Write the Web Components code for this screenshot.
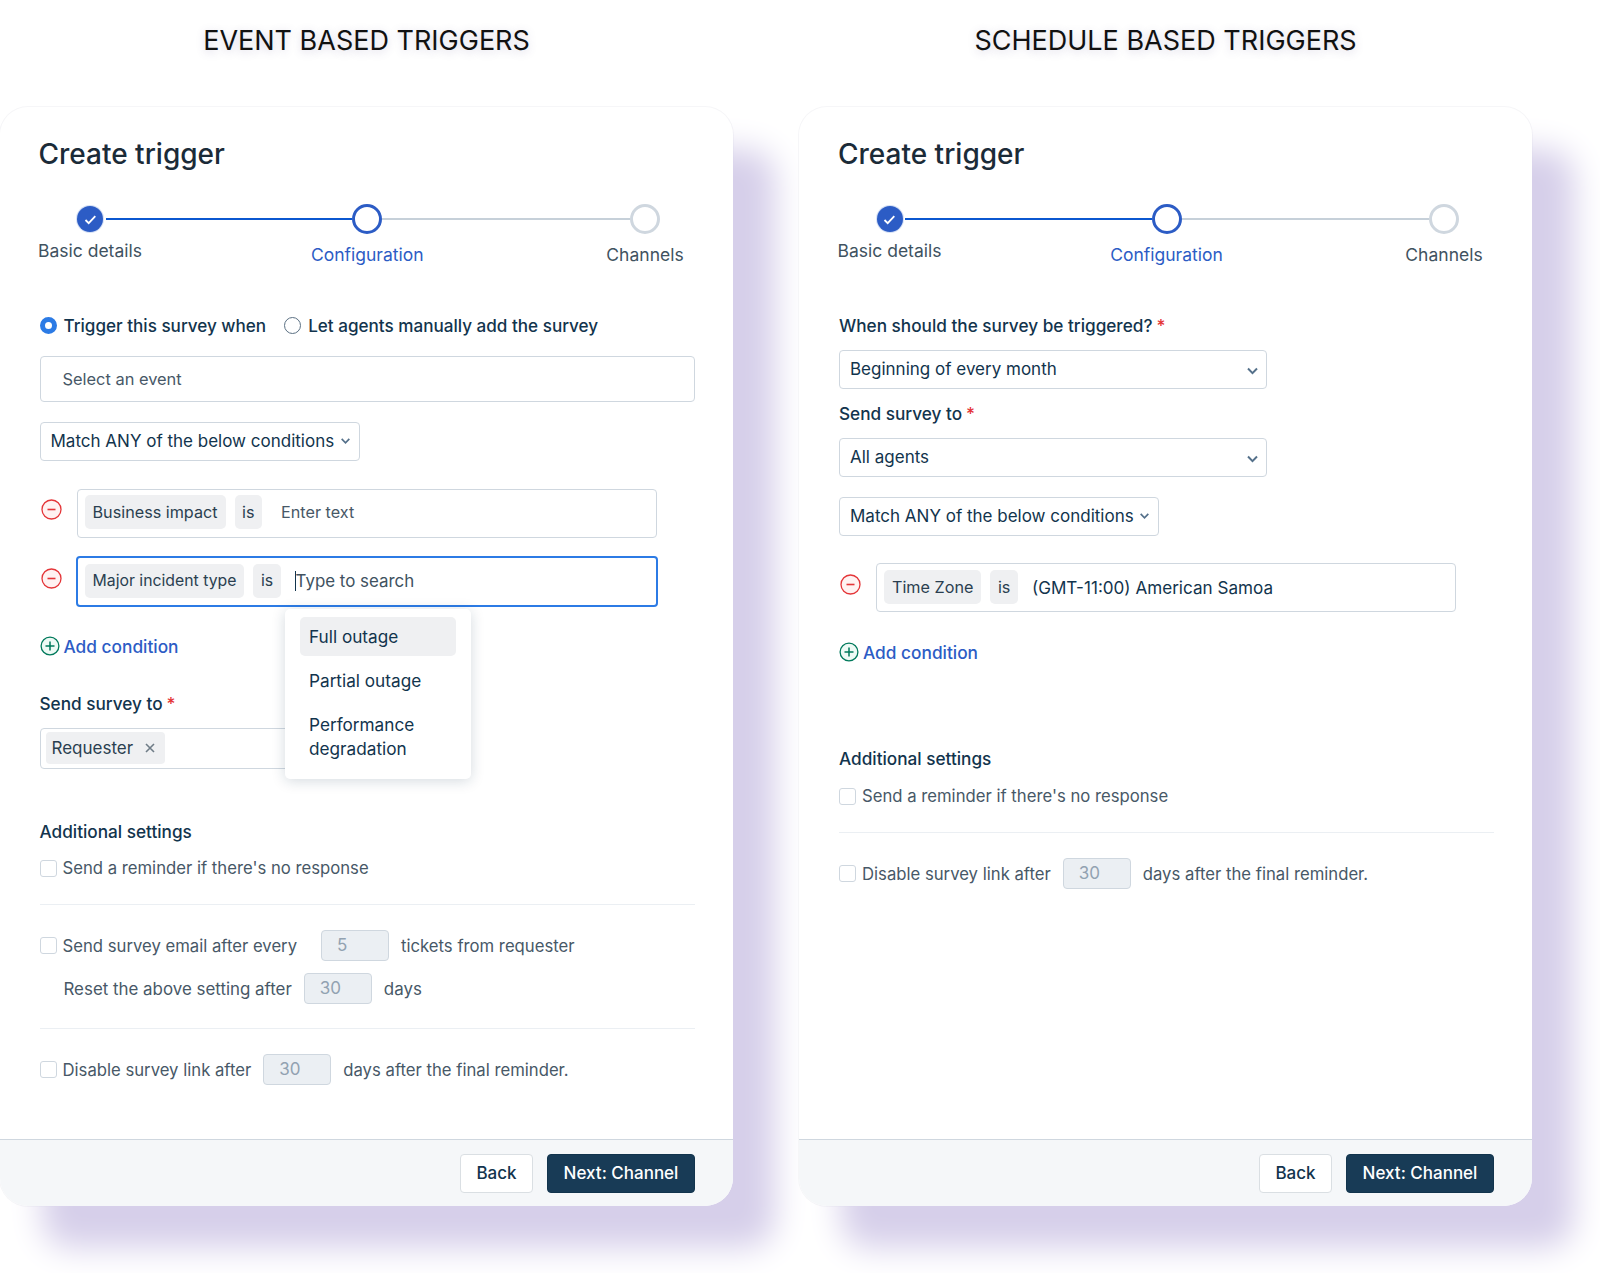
<!DOCTYPE html>
<html>
<head>
<meta charset="utf-8">
<style>
html,body{margin:0;background:#fff;}
body{font-family:Inter,"Liberation Sans",sans-serif;color:#12344d;width:1600px;height:1273px;overflow:hidden;}
.page{display:grid;grid-template-columns:733px 733px;gap:66px;}
</style>
</head>
<body>
<div class="page">
  <tp-panel heading="EVENT BASED TRIGGERS" style="--pad:39.5px">
    <tp-steps style="margin-top:33px"></tp-steps>
    <tp-radios style="margin-top:46px"></tp-radios>
    <tp-field style="margin-top:19px">Select an event</tp-field>
    <tp-select style="margin-top:20px;width:320px" small>Match ANY of the below conditions</tp-select>
    <tp-condition style="margin-top:28px" name="Business impact" value="Enter text"></tp-condition>
    <tp-condition style="margin-top:18px" name="Major incident type" value="Type to search" focused></tp-condition>
    <tp-add style="margin-top:27px"></tp-add>
    <tp-label style="margin-top:34px" required>Send survey to</tp-label>
    <tp-tags style="margin-top:12px"><tp-tag>Requester</tp-tag></tp-tags>
    <tp-label style="margin-top:51px">Additional settings</tp-label>
    <tp-line style="margin-top:12px" check>Send a reminder if there's no response</tp-line>
    <tp-rule style="margin-top:24px"></tp-rule>
    <tp-line style="margin-top:25px" check>Send survey email after every<tp-num style="margin:0 12px 0 24px">5</tp-num>tickets from requester</tp-line>
    <tp-line style="margin-top:12px;padding-left:24px;font-size:16.9px">Reset the above setting after<tp-num style="margin:0 12px">30</tp-num>days</tp-line>
    <tp-rule style="margin-top:24px"></tp-rule>
    <tp-line style="margin-top:25px" check>Disable survey link after<tp-num style="margin:0 12px">30</tp-num>days after the final reminder.</tp-line>
    <tp-menu></tp-menu>
  </tp-panel>
  <tp-panel heading="SCHEDULE BASED TRIGGERS">
    <tp-steps style="margin-top:33px"></tp-steps>
    <tp-label style="margin-top:47px" required>When should the survey be triggered?</tp-label>
    <tp-select style="margin-top:12px;width:428px">Beginning of every month</tp-select>
    <tp-label style="margin-top:13px" required>Send survey to</tp-label>
    <tp-select style="margin-top:12px;width:428px">All agents</tp-select>
    <tp-select style="margin-top:20px;width:320px" small>Match ANY of the below conditions</tp-select>
    <tp-condition style="margin-top:27px" name="Time Zone" value="(GMT-11:00) American Samoa" filled></tp-condition>
    <tp-add style="margin-top:28px"></tp-add>
    <tp-label style="margin-top:83px">Additional settings</tp-label>
    <tp-line style="margin-top:13px" check>Send a reminder if there's no response</tp-line>
    <tp-rule style="margin-top:24px"></tp-rule>
    <tp-line style="margin-top:25px" check>Disable survey link after<tp-num style="margin:0 12px">30</tp-num>days after the final reminder.</tp-line>
  </tp-panel>
</div>

<script>
// small helper, every element below is the same shape
function define(tag, css, html) {
  customElements.define(tag, class extends HTMLElement {
    constructor() {
      super();
      const root = this.attachShadow({ mode: "open" });
      root.innerHTML = "<style>" + css + "</style>" + (typeof html === "function" ? html(this) : html);
    }
  });
}

define("tp-panel", `
  :host{display:block;position:relative;}
  .title{height:82px;margin:0;font-size:27px;font-weight:400;line-height:82px;text-align:center;color:#111;
    text-shadow:0 2px 8px rgba(90,80,140,.25);}
  .card{position:relative;height:1099px;margin-top:25px;box-sizing:border-box;background:#fff;border-radius:28px;
    box-shadow:42px 42px 32px #d6cfea,0 0 0 1px #f6f6f8;display:flex;flex-direction:column;}
  .body{flex:1;padding:30px 38px 0 var(--pad,40px);}
  h2{margin:0 0 0 -1px;font-size:28px;font-weight:500;line-height:34px;color:#1b2b38;}
  footer{height:67px;box-sizing:border-box;border-top:1px solid #cfd7df;background:#f5f7f9;border-radius:0 0 28px 28px;
    display:flex;justify-content:flex-end;align-items:center;gap:14px;padding:0 38px 0 0;}
  button{font:500 17px Inter,"Liberation Sans",sans-serif;height:39px;box-sizing:border-box;border-radius:4px;padding:0 15px;}
  .back{background:#fff;border:1px solid #dadfe3;color:#12344d;width:73px;}
  .next{background:#183b56;border:1px solid #12344d;color:#fff;width:148px;}
`, (el) => `
  <div class="title">${el.getAttribute("heading")}</div>
  <div class="card">
    <div class="body"><h2>Create trigger</h2><slot></slot></div>
    <footer><button class="back">Back</button><button class="next">Next: Channel</button></footer>
  </div>
`);

define("tp-steps", `
  :host{display:grid;grid-template-columns:100px 1fr 100px 1fr 100px;grid-template-rows:30px 24px;row-gap:9px;height:63px;text-align:center;font-size:17.5px;line-height:24px;}
  .dot{justify-self:center;align-self:center;box-sizing:border-box;border-radius:50%;background:#fff;position:relative;z-index:1;}
  .done{width:26px;height:26px;margin-left:1px;background:#2c5cc5;box-shadow:0 0 0 1px #d5e0f5;display:flex;align-items:center;justify-content:center;}
  .on{width:30px;height:30px;border:3px solid #2c5cc5;}
  .off{width:30px;height:30px;border:3px solid #cfd7df;}
  .line{align-self:center;height:2px;margin:0 -35px;}
  .blue{background:#0b57d0;margin-left:-34px;}
  .grey{background:#c6d0d9;}
  .lab{white-space:nowrap;justify-self:center;color:#40525f;}
  .lab.first{margin:-4px 0 0 1px;}
  .lab.cur{color:#2c5cc5;}
`, `
  <div class="dot done"><svg width="15" height="15" viewBox="0 0 15 15"><path d="M2.5 8l3.2 3.2 6.6-7" fill="none" stroke="#fff" stroke-width="1.8"/></svg></div>
  <div class="line blue"></div>
  <div class="dot on"></div>
  <div class="line grey"></div>
  <div class="dot off"></div>
  <div class="lab first">Basic details</div>
  <div></div>
  <div class="lab cur">Configuration</div>
  <div></div>
  <div class="lab">Channels</div>
`);

define("tp-radios", `
  :host{display:flex;align-items:center;height:24px;font-size:17.1px;font-weight:500;color:#12344d;}
  i{display:block;box-sizing:border-box;width:17px;height:17px;border-radius:50%;}
  .a{border:5px solid #2c7be5;margin-right:7px;}
  .b{border:1px solid #5b7083;margin:0 7px 0 18px;}
`, `<i class="a"></i><span>Trigger this survey when</span><i class="b"></i><span>Let agents manually add the survey</span>`);

define("tp-field", `
  :host{display:block;height:46px;box-sizing:border-box;border:1px solid #cfd7df;border-radius:4px;padding:0 22px;line-height:44px;font-size:16.4px;color:#475867;}
`, `<slot></slot>`);

define("tp-select", `
  :host{display:flex;align-items:center;height:39px;box-sizing:border-box;border:1px solid #cfd7df;border-radius:4px;padding:0 8px 0 10px;font-size:17px;color:#12344d;justify-content:space-between;white-space:nowrap;}
  span{margin-top:-2px;}
  svg{flex:none;margin-top:2px;}
  :host([small]) svg{margin-top:-1px;transform:scale(.85);}
`, `<span><slot></slot></span><svg width="11" height="8" viewBox="0 0 11 8"><path d="M1 1.5l4.5 4.6 4.5-4.6" fill="none" stroke="#54708a" stroke-width="2"/></svg>`);

define("tp-condition", `
  :host{display:flex;align-items:flex-start;width:617px;font-size:16.2px;}
  svg{flex:none;margin:10px 15px 0 1px;}
  .box{flex:1;display:flex;align-items:center;gap:9px;height:49px;box-sizing:border-box;border:1px solid #cfd7df;border-radius:4px;padding:0 8px 3px 7px;}
  :host([focused]) .box{height:51px;border:2px solid #2c7be5;margin-left:-1px;margin-right:-1px;padding:0 7px 1px;}
  :host([focused]) svg{margin-top:12px;}
  :host([focused]) .chip{font-size:15.8px;}
  :host([filled]) svg{margin-top:11px;}
  :host([filled]) .box{padding-bottom:1px;}
  .chip{background:#eff0f2;border-radius:5px;height:34px;line-height:34px;padding:0 8px;color:#2a3f50;white-space:nowrap;}
  .is{padding:0 7.5px;}
  .val{margin-left:10px;color:#475867;}
  :host([focused]) .val{margin-left:5px;border-left:1px solid #12344d;height:20px;line-height:20px;font-size:16.9px;color:#40525f;}
  :host([filled]) .val{margin-left:5px;color:#12344d;font-size:17.1px;}
`, (el) => `
  <svg width="21" height="21" viewBox="0 0 21 21"><circle cx="10.5" cy="10.5" r="9.5" fill="#fff2f2" stroke="#e43538" stroke-width="1.3"/><path d="M6.5 10.5h8" stroke="#e43538" stroke-width="1.6"/></svg>
  <div class="box"><span class="chip">${el.getAttribute("name")}</span><span class="chip is">is</span><span class="val">${el.getAttribute("value")}</span></div>
`);

define("tp-add", `
  :host{display:flex;align-items:center;gap:4px;height:24px;font-size:17.3px;font-weight:500;color:#2c5cc5;}
  svg{flex:none;}
`, `<svg width="20" height="20" viewBox="0 0 20 20"><circle cx="10" cy="10" r="8.9" fill="#eefaf5" stroke="#00795b" stroke-width="1.3"/><path d="M10 5.5v9M5.5 10h9" stroke="#00795b" stroke-width="1.5"/></svg><span>Add condition</span>`);

define("tp-label", `
  :host{display:block;height:24px;line-height:24px;font-size:17.2px;font-weight:500;color:#12344d;white-space:nowrap;}
  b{display:none;color:#e43538;font-weight:500;margin-left:4px;}
  :host([required]) b{display:inline;}
`, `<slot></slot><b>*</b>`);

define("tp-tags", `
  :host{display:flex;align-items:center;height:41px;width:279px;box-sizing:border-box;border:1px solid #cfd7df;border-radius:4px;padding:0 5px 1px;}
`, `<slot></slot>`);

define("tp-tag", `
  :host{display:flex;align-items:center;gap:12px;height:32px;padding:0 10px 0 6px;background:#eff0f2;border-radius:4px;font-size:17px;color:#2a3f50;}
`, `<span><slot></slot></span><svg width="10" height="10" viewBox="0 0 10 10"><path d="M1 1l8 8M9 1L1 9" stroke="#6f7c87" stroke-width="1.6"/></svg>`);

define("tp-line", `
  :host{display:flex;align-items:center;min-height:24px;font-size:16.7px;color:#475867;white-space:nowrap;}
  i{display:none;width:17px;height:17px;box-sizing:border-box;border:1px solid #cfd7df;border-radius:3px;margin-right:6px;flex:none;}
  :host([check]) i{display:block;}
`, `<i></i><slot></slot>`);

define("tp-num", `
  :host{display:inline-block;width:68px;height:31px;box-sizing:border-box;border:1px solid #cfd7df;border-radius:4px;background:#ebeff3;color:#92a2b1;font-size:17px;line-height:28px;padding-left:15px;}
`, `<slot></slot>`);

define("tp-rule", `:host{display:block;height:1px;background:#ebeff3;}`, ``);

define("tp-menu", `
  :host{position:absolute;left:285px;top:502px;width:186px;height:170px;box-sizing:border-box;background:#fff;border-radius:5px;
    box-shadow:0 2px 14px rgba(18,52,77,.18);padding:8px 15px;font-size:17.2px;color:#12344d;z-index:5;line-height:24px;}
  div{padding:0 9px;}
  .hit{background:#eff0f2;border-radius:5px;height:39px;line-height:40px;}
  .two{margin-top:13px;}
  .three{margin-top:20px;}
`, `<div class="hit">Full outage</div><div class="two">Partial outage</div><div class="three">Performance degradation</div>`);
</script>
</body>
</html>
